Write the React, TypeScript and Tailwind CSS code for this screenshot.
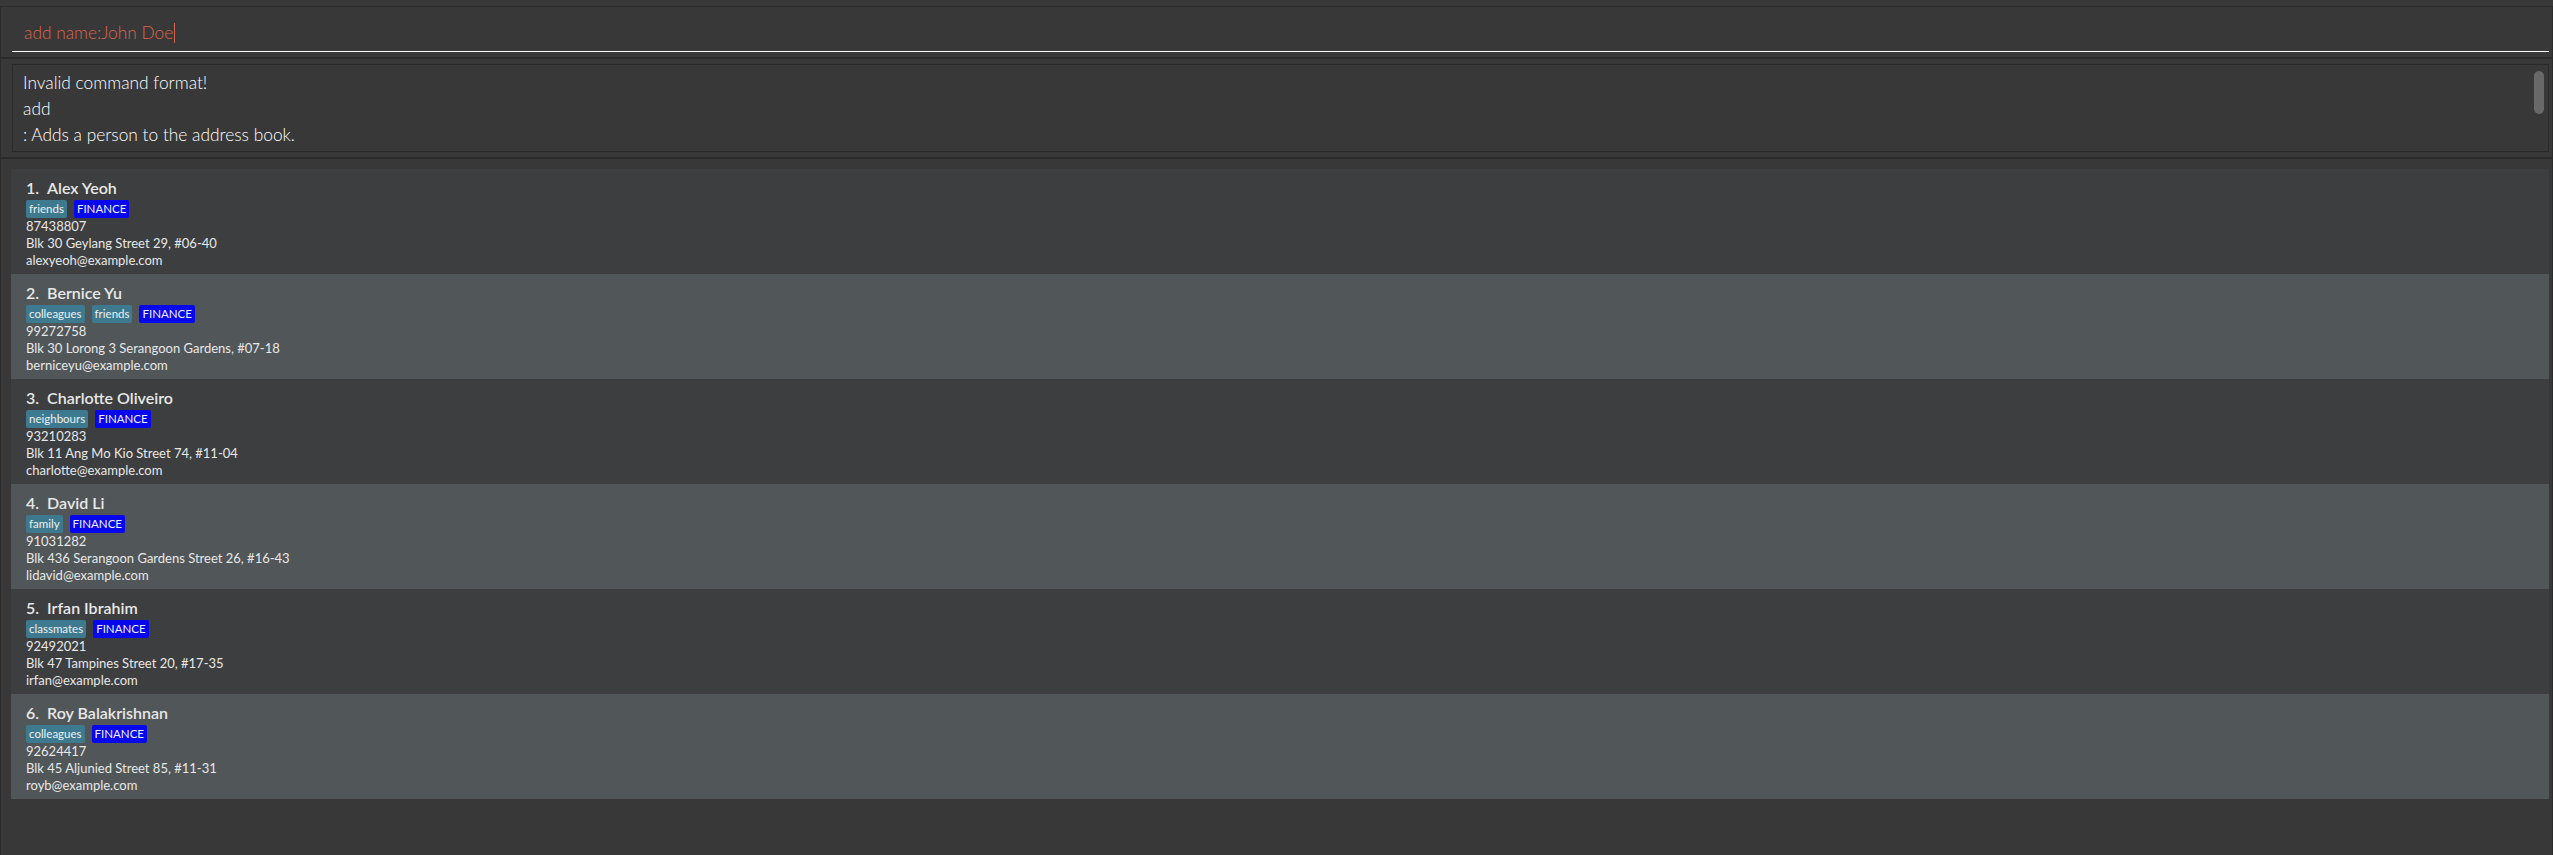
import React from "react";

type Person = {
  name: string;
  tags: string[];
  phone: string;
  address: string;
  email: string;
};

const persons: Person[] = [
  { name: "Alex Yeoh", tags: ["friends"], phone: "87438807", address: "Blk 30 Geylang Street 29, #06-40", email: "alexyeoh@example.com" },
  { name: "Bernice Yu", tags: ["colleagues", "friends"], phone: "99272758", address: "Blk 30 Lorong 3 Serangoon Gardens, #07-18", email: "berniceyu@example.com" },
  { name: "Charlotte Oliveiro", tags: ["neighbours"], phone: "93210283", address: "Blk 11 Ang Mo Kio Street 74, #11-04", email: "charlotte@example.com" },
  { name: "David Li", tags: ["family"], phone: "91031282", address: "Blk 436 Serangoon Gardens Street 26, #16-43", email: "lidavid@example.com" },
  { name: "Irfan Ibrahim", tags: ["classmates"], phone: "92492021", address: "Blk 47 Tampines Street 20, #17-35", email: "irfan@example.com" },
  { name: "Roy Balakrishnan", tags: ["colleagues"], phone: "92624417", address: "Blk 45 Aljunied Street 85, #11-31", email: "royb@example.com" },
];

function PersonCard({ person, index }: { person: Person; index: number }) {
  const even = index % 2 === 1;
  return (
    <div className={`h-[105px] pl-[15px] pt-[8px] pb-[5px] text-[#e8e8e8] ${even ? "bg-[#515658]" : "bg-[#3c3e3f]"}`}>
      <div className="flex gap-[8px] text-[16px] font-semibold leading-[22px]">
        <span>{index + 1}.</span>
        <span>{person.name}</span>
      </div>
      <div className="mt-[1px] flex gap-[7px] text-[11.5px] leading-[16px] text-[#eef0f0]">
        {person.tags.map((t) => (
          <span key={t} className="rounded-[2px] bg-[#3e7a8f] px-[3px] py-[1px]">
            {t}
          </span>
        ))}
        <span className="rounded-[2px] bg-[#0707ed] px-[3px] py-[1px]">FINANCE</span>
      </div>
      <div className="text-[13px] leading-[17px]">
        <div>{person.phone}</div>
        <div>{person.address}</div>
        <div>{person.email}</div>
      </div>
    </div>
  );
}

export default function App() {
  return (
    <div
      className="flex h-[855px] w-[2553px] flex-col overflow-hidden bg-[#383838] pt-[6px]"
      style={{ fontFamily: "Lato, 'Open Sans', sans-serif" }}
    >
      {/* command box */}
      <div className="h-[51px] border-x border-t border-[#2b2b2b] pl-[11px] pr-[3px] pt-[7px]">
        <div className="flex h-[38px] items-center border-b border-white pl-[12px] text-[17.33px] font-light text-[#d8664f]">
          <span>add name:John Doe</span>
          <span className="ml-[1px] h-[20px] w-[1px] bg-[#d06651]" />
        </div>
      </div>

      {/* result display */}
      <div className="h-[100px] border-x border-t-2 border-[#2b2b2b] pl-[11px] pr-[3px] pt-[5px]">
        <div className="relative h-[88px] border border-[#2a2a2a] pl-[10px] pt-[5px] text-[17.33px] font-light leading-[26px] text-white">
          <div>Invalid command format!</div>
          <div>add</div>
          <div>: Adds a person to the address book.</div>
          <div className="absolute right-[4px] top-[6px] h-[43px] w-[10px] rounded-full bg-[#686868]" />
        </div>
      </div>

      {/* person list */}
      <div className="flex-1 border-x border-t-2 border-[#2b2b2b] pl-[10px] pr-[3px] pt-[10px]">
        {persons.map((p, i) => (
          <PersonCard key={p.name} person={p} index={i} />
        ))}
      </div>
    </div>
  );
}
